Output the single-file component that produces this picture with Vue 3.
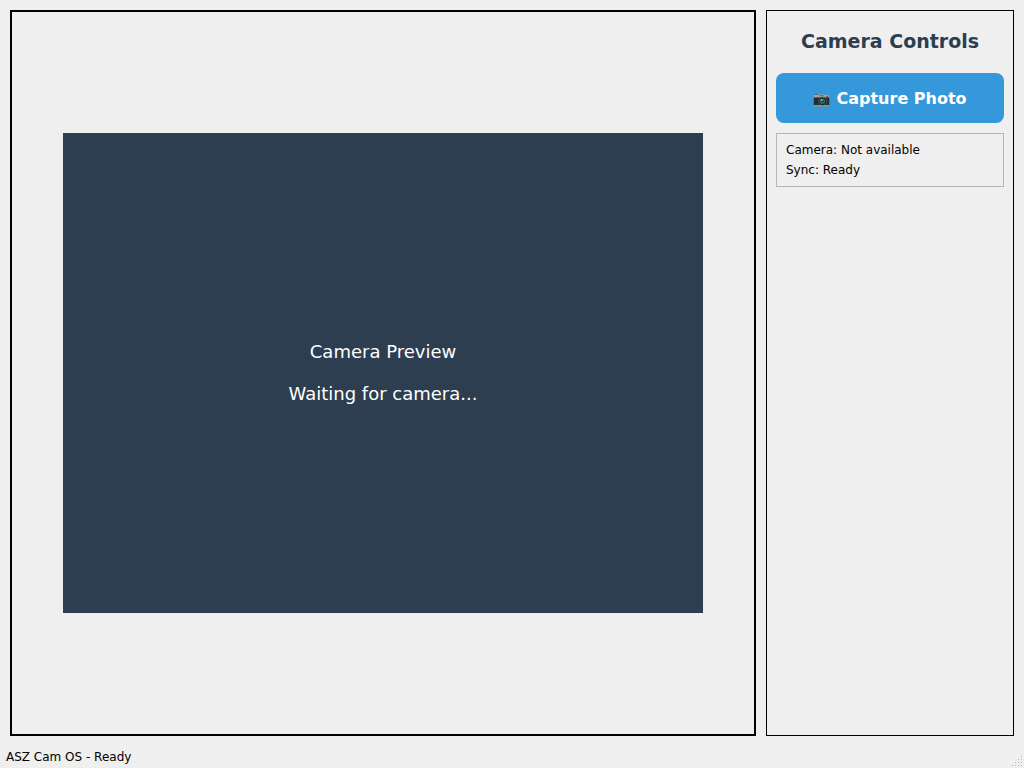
<script setup>
import { ref } from 'vue'

const cameraStatus = ref('Not available')
const syncStatus = ref('Ready')
const gripDots = [[9, 0], [6, 3], [9, 3], [3, 6], [6, 6], [9, 6], [0, 9], [3, 9], [6, 9], [9, 9]]
</script>

<template>
  <div class="window">
    <main class="content">
      <section class="viewer">
        <div class="preview">
          <p>Camera Preview</p>
          <p>Waiting for camera...</p>
        </div>
      </section>
      <aside class="controls">
        <h1>Camera Controls</h1>
        <button class="capture" type="button">
          <svg class="camera" width="17" height="14" viewBox="0 0 17 14" aria-hidden="true">
            <path d="M2 2.2V1.2h2.5v1z" fill="#555" />
            <path d="M.7 3.2Q.7 2 2 2h3.4L6.6.9h4L11.8 2H15q1.3 0 1.3 1.2V5H.7z" fill="#a6a69f" />
            <path d="M6.6 1.4h4l.6 1.8H6z" fill="#777b78" />
            <path d="M.7 4.5h15.6v7.7H.7z" fill="#3a3f3f" />
            <path d="M1.3 4.7h14.4v7.2H1.3z" fill="#252a2b" />
            <path d="M.7 12h15.6v.6q0 .8-.8.8h-14q-.8 0-.8-.8z" fill="#92958f" />
            <circle cx="9.4" cy="8.2" r="4.4" fill="#5b6362" />
            <circle cx="9.4" cy="8.2" r="3.7" fill="#172528" />
            <circle cx="9.4" cy="8.2" r="2.6" fill="#287c84" />
            <circle cx="9.4" cy="8.2" r="1.3" fill="#174149" />
            <circle cx="8.6" cy="7.2" r=".9" fill="#75bdc0" />
            <path d="M13.4 3h1.7v1h-1.7z" fill="#4b504e" />
          </svg>
          <span>Capture Photo</span>
        </button>
        <div class="info">
          <div>Camera: {{ cameraStatus }}</div>
          <div>Sync: {{ syncStatus }}</div>
        </div>
      </aside>
    </main>
    <footer class="statusbar">
      <span>ASZ Cam OS - Ready</span>
      <svg class="grip" width="11" height="11" viewBox="0 0 11 11" aria-hidden="true">
        <rect v-for="([x, y], i) in gripDots" :key="i" :x="x" :y="y" width="1" height="1" />
      </svg>
    </footer>
  </div>
</template>

<style>
body {
  background: #efefef;
}
</style>

<style scoped>
.window {
  box-sizing: border-box;
  height: 768px;
  display: flex;
  flex-direction: column;
  background: #efefef;
  color: #000;
  font: 12px/20px "DejaVu Sans", sans-serif;
}
.content {
  height: 746px;
  box-sizing: border-box;
  padding: 10px;
  display: flex;
  gap: 10px;
}
.viewer {
  box-sizing: border-box;
  flex: 1;
  border: 2px solid #000;
  display: flex;
  align-items: center;
  justify-content: center;
}
.preview {
  box-sizing: border-box;
  width: 640px;
  height: 480px;
  padding-bottom: 2px;
  display: flex;
  flex-direction: column;
  align-items: center;
  justify-content: center;
  gap: 21px;
  background: #2c3e50;
  color: #fff;
  font-size: 18px;
  line-height: 21px;
}
.preview p {
  margin: 0;
}
.controls {
  box-sizing: border-box;
  width: 248px;
  border: 1px solid #000;
  padding: 9px;
}
h1 {
  margin: 0 0 10px;
  height: 43px;
  text-align: center;
  color: #2c3e50;
  font-size: 19px;
  line-height: 42px;
}
.capture {
  box-sizing: border-box;
  width: 228px;
  height: 50px;
  display: flex;
  align-items: center;
  justify-content: center;
  gap: 6px;
  padding: 2px 0 0;
  border: 0;
  border-radius: 8px;
  background: #3498db;
  color: #fff;
  font: bold 16px/20px "DejaVu Sans", sans-serif;
}
.camera {
  margin-top: 2px;
}
.info {
  box-sizing: border-box;
  width: 228px;
  height: 54px;
  margin-top: 10px;
  border: 1px solid #b5b5b5;
  padding: 6px 9px;
}
.statusbar {
  box-sizing: border-box;
  height: 22px;
  display: flex;
  align-items: flex-end;
  justify-content: space-between;
  padding: 0 1px 1px 6px;
}
.grip {
  fill: #b4b4b4;
}
</style>
